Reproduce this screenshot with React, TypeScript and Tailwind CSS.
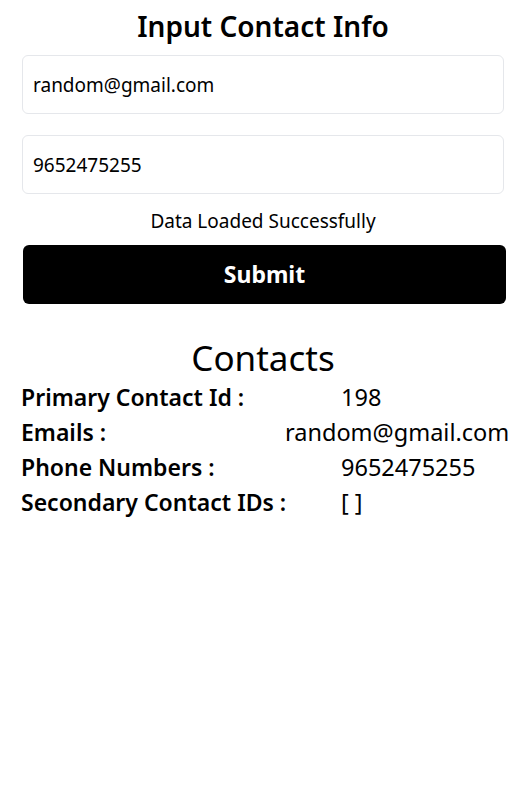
import { useState } from 'react';

const App = () => {
  const [email, setEmail] = useState('random@gmail.com');
  const [phone, setPhone] = useState('9652475255');

  const rows = [
    { label: 'Primary Contact Id :', value: '198', shift: '' },
    { label: 'Emails :', value: 'random@gmail.com', shift: '-ml-[56px]' },
    { label: 'Phone Numbers :', value: '9652475255', shift: '' },
    { label: 'Secondary Contact IDs :', value: '[ ]', shift: '' },
  ];

  return (
    <div className="min-h-screen bg-white text-black font-['Noto_Sans',sans-serif]">
      {/* Formulaire */}
      <div className="px-[22px] pt-[6px] flex flex-col">
        <h1 className="text-[28px] font-semibold text-center leading-[40px]">Input Contact Info</h1>
        <input
          value={email}
          onChange={(e) => setEmail(e.target.value)}
          className="mt-[9px] h-[59px] w-full border border-gray-200 rounded-md px-[10px] text-[19px] outline-none"
        />
        <input
          value={phone}
          onChange={(e) => setPhone(e.target.value)}
          className="mt-[21px] h-[59px] w-full border border-gray-200 rounded-md px-[10px] text-[19px] outline-none"
        />
        <p className="text-center text-[19px] leading-[26px] mt-[14px]">Data Loaded Successfully</p>
        <button className="mt-[11px] ml-px w-[483px] h-[59px] bg-black text-white rounded-md text-[23px] font-bold">
          Submit
        </button>
      </div>

      {/* Résultat */}
      <div className="mt-[33px]">
        <h2 className="text-center text-[35px] leading-[42px]">Contacts</h2>
        <div className="px-[21px] pt-[1px] flex flex-col">
          {rows.map((r) => (
            <div key={r.label} className="grid grid-cols-[320px_1fr] text-[23px] leading-[35px]">
              <span className="font-semibold whitespace-nowrap">{r.label}</span>
              <span className={`whitespace-nowrap text-[23.5px] ${r.shift}`}>{r.value}</span>
            </div>
          ))}
        </div>
      </div>
    </div>
  );
};

export default App;
